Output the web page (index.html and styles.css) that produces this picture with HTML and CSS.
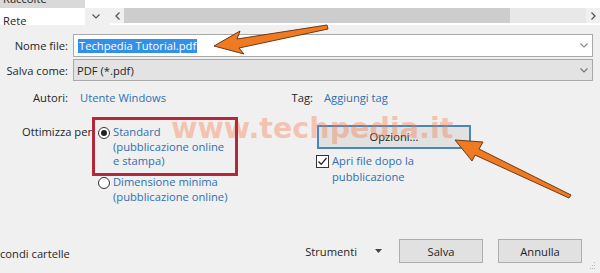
FILE: index.html
```html
<!DOCTYPE html>
<html lang="it">
<head>
<meta charset="utf-8">
<title>Salva con nome</title>
<link rel="stylesheet" href="styles.css">
</head>
<body>
<div class="page">
  <div class="topbar">
    <div class="nav-sel"><span>Raccolte</span></div>
    <div class="white"></div>
    <div class="white"></div>
    <div class="nav-item">Rete</div>
    <div class="nav-chev">
      <svg width="8" height="5" viewBox="0 0 8 5"><polyline points="0.5,0.5 4,4 7.5,0.5" fill="none" stroke="#555" stroke-width="1.2"/></svg>
    </div>
    <div class="hscroll">
      <div class="sarrow">
        <svg width="5" height="8" viewBox="0 0 5 8"><polyline points="4.5,0.5 1,4 4.5,7.5" fill="none" stroke="#555" stroke-width="1.3"/></svg>
      </div>
      <div class="thumb"></div>
      <div class="trackrest"></div>
      <div class="sarrow right">
        <svg width="5" height="8" viewBox="0 0 5 8"><polyline points="0.5,0.5 4,4 0.5,7.5" fill="none" stroke="#555" stroke-width="1.3"/></svg>
      </div>
    </div>
  </div>

  <div class="fields">
    <div class="frow">
      <label class="lbl">Nome file:</label>
      <div class="combo">
        <span class="selected">Techpedia Tutorial.pdf</span>
        <svg class="cchev" width="8" height="5" viewBox="0 0 8 5"><polyline points="0.5,0.5 4,4 7.5,0.5" fill="none" stroke="#888" stroke-width="1.1"/></svg>
      </div>
    </div>
    <div class="frow">
      <label class="lbl">Salva come:</label>
      <div class="combo type">
        <span>PDF (*.pdf)</span>
        <svg class="cchev" width="8" height="5" viewBox="0 0 8 5"><polyline points="0.5,0.5 4,4 7.5,0.5" fill="none" stroke="#777" stroke-width="1.1"/></svg>
      </div>
    </div>
  </div>

  <div class="meta">
    <span class="mlbl">Autori:</span>
    <span class="link mval">Utente Windows</span>
    <span class="mlbl2">Tag:</span>
    <span class="link mval2">Aggiungi tag</span>
  </div>

  <div class="opts">
    <div class="opt-lbl">Ottimizza per:</div>
    <div class="radios">
      <div class="radio">
        <span class="rbtn on"></span>
        <span class="link rtext">Standard<br>(pubblicazione online<br>e stampa)</span>
      </div>
      <div class="radio">
        <span class="rbtn"></span>
        <span class="link rtext">Dimensione minima<br>(pubblicazione online)</span>
      </div>
    </div>
    <div class="rcol">
      <button class="btn focus">Opzioni...</button>
      <div class="check">
        <span class="cbox">
          <svg width="11" height="11" viewBox="0 0 11 11"><polyline points="1.5,5.5 4.2,8.3 9.5,2" fill="none" stroke="#222" stroke-width="1.3"/></svg>
        </span>
        <span class="link ctext">Apri file dopo la<br>pubblicazione</span>
      </div>
    </div>
  </div>

  <div class="footer">
    <div class="hide">condi cartelle</div>
    <div class="tools">
      <span>Strumenti</span>
      <svg width="7" height="4" viewBox="0 0 7 4"><polygon points="0,0 7,0 3.5,4" fill="#444"/></svg>
    </div>
    <button class="btn fbtn">Salva</button>
    <button class="btn fbtn last">Annulla</button>
  </div>
</div>

<div class="watermark">www.techpedia.it</div>
<div class="redbox"></div>
<svg class="overlay" width="600" height="273" viewBox="0 0 600 273">
  <polygon points="214,46 240,31 237,39 327,25 328,29 239,48 244,54" fill="#f07a22" stroke="#6b3a18" stroke-width="1" stroke-linejoin="round"/>
  <polygon points="455,140 483,142 479,149 571,195 569,198 475,155 472,161" fill="#f07a22" stroke="#6b3a18" stroke-width="1" stroke-linejoin="round"/>
  <g fill="#b5b5b5">
    <rect x="594" y="262" width="1" height="1"/>
    <rect x="592" y="265" width="1" height="1"/>
    <rect x="594" y="265" width="1" height="1"/>
    <rect x="590" y="268" width="1" height="1"/>
    <rect x="592" y="268" width="1" height="1"/>
    <rect x="594" y="268" width="1" height="1"/>
  </g>
</svg>
</body>
</html>
```
FILE: styles.css
```css
* { box-sizing: border-box; margin: 0; padding: 0; }
html, body { width: 600px; height: 273px; overflow: hidden; }
body {
  background: #f0f0f0;
  font-family: "Open Sans", "Noto Sans", sans-serif;
  font-size: 11.2px;
  color: #262626;
  position: relative;
}
.page { height: 273px; display: flex; flex-direction: column; }

.topbar {
  display: grid;
  grid-template-columns: 85px 25px 1fr;
  grid-template-rows: 8px 17px;
  background: #fff;
}
.white { background: #fff; }
.nav-sel {
  background: #d9d9d9;
  display: flex;
  align-items: flex-end;
  overflow: hidden;
  padding-left: 3px;
}
.nav-sel span { line-height: 16px; display: block; margin-bottom: 1px; }
.nav-item {
  background: #fff;
  padding: 5px 0 0 3px;
  line-height: 16px;
  overflow: hidden;
}
.nav-chev {
  background: #f0f0f0;
  display: flex;
  justify-content: center;
  align-items: flex-start;
  padding: 6px 4px 0 0;
}
.hscroll {
  display: flex;
  height: 15px;
  background: #e8e8e8;
}
.sarrow {
  width: 14px;
  display: flex;
  align-items: center;
  justify-content: center;
  background: #f0f0f0;
}
.thumb { width: 386px; background: #cdcdcd; }
.trackrest { flex: 1; background: #e8e8e8; }

.fields {
  padding: 9px 7px 0 0;
  display: flex;
  flex-direction: column;
  gap: 2px;
}
.frow { display: flex; align-items: center; }
.lbl { width: 68px; text-align: right; margin-right: 5px; white-space: nowrap; }
.combo {
  flex: 1;
  height: 23px;
  border: 1px solid #a9a9a9;
  background: #fff;
  display: flex;
  align-items: center;
  padding: 0 4px 0 4px;
}
.combo.type { height: 22px; background: #e3e3e3; padding-left: 3px; }
.combo span { flex: 1; white-space: nowrap; }
.combo .selected {
  flex: 0 0 auto;
  background: #3390ea;
  color: #fff;
  line-height: 14px;
  padding: 0 1px;
}
.cchev { margin-left: auto; }

.link { color: #2f6fb3; }

.meta { display: flex; margin-top: 9px; line-height: 16px; white-space: nowrap; }
.mlbl { width: 68px; text-align: right; }
.mval { margin-left: 12px; width: 210px; }
.mlbl2 { width: 23px; text-align: right; }
.mval2 { margin-left: 11px; }

.opts { display: flex; margin-top: 19px; line-height: 14.5px; }
.opt-lbl {
  width: 98px;
  padding-left: 22px;
  white-space: nowrap;
  overflow: hidden;
}
.radios { width: 218px; display: flex; flex-direction: column; gap: 6.5px; }
.radio { display: flex; align-items: flex-start; }
.rbtn {
  width: 12px; height: 12px;
  border: 1px solid #333;
  border-radius: 50%;
  background: #fff;
  margin-top: 1.5px;
  flex: 0 0 auto;
  display: flex;
  align-items: center;
  justify-content: center;
}
.rbtn.on::after {
  content: "";
  width: 6px; height: 6px;
  border-radius: 50%;
  background: #222;
}
.rtext { margin-left: 3px; white-space: nowrap; }

.rcol { display: flex; flex-direction: column; }
.btn {
  font: inherit;
  color: #1e1e1e;
  background: #e1e1e1;
  border: 1px solid #adadad;
  display: flex;
  align-items: center;
  justify-content: center;
}
.btn.focus {
  width: 154px;
  height: 24px;
  margin-left: 1px;
  border: 2px solid #4a87b8;
}
.check { display: flex; align-items: flex-start; margin-top: 4px; line-height: 16px; }
.cbox {
  width: 13px; height: 13px;
  border: 1px solid #333;
  background: #fff;
  margin-top: 2px;
  display: flex;
  align-items: center;
  justify-content: center;
  flex: 0 0 auto;
}
.ctext { margin-left: 3px; white-space: nowrap; }

.footer {
  margin-top: auto;
  margin-bottom: 10px;
  display: flex;
  align-items: center;
  height: 24px;
}
.hide { flex: 1; padding-top: 5px; white-space: nowrap; }
.tools { display: flex; align-items: center; gap: 18px; margin-right: 17px; }
.fbtn { width: 84px; height: 24px; margin-right: 15px; }
.fbtn.last { margin-right: 18px; }

.watermark {
  position: absolute;
  left: 171px;
  top: 114px;
  font-family: "DejaVu Sans", sans-serif;
  font-weight: bold;
  font-size: 28.6px;
  line-height: 29px;
  color: rgba(245, 120, 70, 0.38);
  white-space: nowrap;
  pointer-events: none;
}
.redbox {
  position: absolute;
  left: 92px;
  top: 117px;
  width: 146px;
  height: 59px;
  border: 3px solid #b3283a;
  pointer-events: none;
}
.overlay { position: absolute; left: 0; top: 0; pointer-events: none; }
```
